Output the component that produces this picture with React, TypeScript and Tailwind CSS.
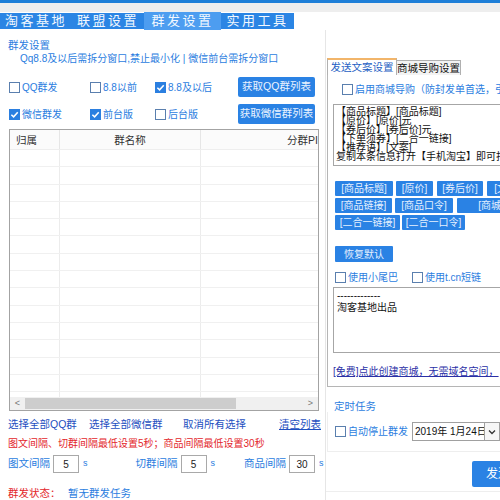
import React from "react";

const blueText = "text-[#2b7de0]";

function Check({ on }: { on: boolean }) {
  if (on) {
    return (
      <span className="w-[11px] h-[11px] shrink-0 bg-[#2b7fe0] flex items-center justify-center">
        <svg width="9" height="9" viewBox="0 0 10 10">
          <path d="M1.5 5.2 L4 7.6 L8.6 2.4" stroke="white" strokeWidth="1.7" fill="none" />
        </svg>
      </span>
    );
  }
  return <span className="w-[11px] h-[11px] shrink-0 border border-[#5a7fae] bg-white" />;
}

function Cb({ on, label, cls = "" }: { on: boolean; label: string; cls?: string }) {
  return (
    <div className={`flex items-center gap-[2px] ${cls}`}>
      <Check on={on} />
      <span className={`${blueText} text-[10px] leading-[13px] whitespace-nowrap`}>{label}</span>
    </div>
  );
}

function Btn({ label, cls = "" }: { label: string; cls?: string }) {
  return (
    <div
      className={`h-[15px] bg-[#2a82e4] text-[#e6f1ff] text-[10px] leading-[15px] flex items-center justify-center whitespace-nowrap rounded-[1px] ${cls}`}
    >
      {label}
    </div>
  );
}

function Interval({ label, value, cls = "" }: { label: string; value: string; cls?: string }) {
  return (
    <div className={`flex items-center ${cls}`}>
      <span className={`${blueText} text-[10.5px] whitespace-nowrap`}>{label}</span>
      <div className="ml-[3px] w-[26px] h-[18px] border border-[#a9a9a9] text-[10px] text-[#222] flex items-center justify-center">
        {value}
      </div>
      <span className={`${blueText} text-[9px] ml-[4px]`}>s</span>
    </div>
  );
}

export default function App() {
  const tabs = [
    { t: "淘客基地", w: "w-[72px]", on: false },
    { t: "联盟设置", w: "w-[72px]", on: false },
    { t: "群发设置", w: "w-[77px]", on: true },
    { t: "实用工具", w: "w-[73px]", on: false },
  ];
  const rows = Array.from({ length: 16 });

  return (
    <div className="w-[500px] h-[500px] overflow-hidden bg-white font-['Liberation_Sans','Noto_Sans_CJK_SC',sans-serif] text-[10px]">
      <div className="h-[3px] bg-[#1e7fd8]" />
      <div className="h-[9px] bg-[#eeeeee]" />

      {/* main tabs */}
      <div className="flex h-[18px]">
        {tabs.map((tb) => (
          <div
            key={tb.t}
            className={
              tb.on
                ? `${tb.w} h-[18px] bg-[#4d9df0] text-[#f2f8ff] text-[13px] tracking-[2.5px] leading-[18px] text-center`
                : `${tb.w} h-[16px] mt-[1px] bg-[#2b85e4] text-[#f2f8ff] text-[13px] tracking-[2.5px] leading-[16px] text-center`
            }
          >
            {tb.t}
          </div>
        ))}
      </div>

      <div className="flex">
        {/* left column */}
        <div className="w-[326px] shrink-0 h-[470px] flex flex-col border-r border-[#e6e6e6]">
          <div className={`mt-[9px] ml-[8px] ${blueText} text-[10.5px] leading-[13px]`}>群发设置</div>
          <div className={`ml-[20px] ${blueText} text-[10px] leading-[13px]`}>
            Qq8.8及以后需拆分窗口,禁止最小化 | 微信前台需拆分窗口
          </div>

          <div className="mt-[12px] h-[20px] flex items-center pl-[9px] pr-[10px]">
            <Cb on={false} label="QQ群发" cls="w-[81px]" />
            <Cb on={false} label="8.8以前" cls="w-[65px]" />
            <Cb on={true} label="8.8及以后" />
            <div className="ml-auto w-[77px] h-[20px] bg-[#2a82e4] text-[#eaf3ff] text-[10.5px] flex items-center justify-center rounded-[2px]">
              获取QQ群列表
            </div>
          </div>
          <div className="mt-[7px] h-[20px] flex items-center pl-[9px] pr-[10px]">
            <Cb on={true} label="微信群发" cls="w-[81px]" />
            <Cb on={true} label="前台版" cls="w-[65px]" />
            <Cb on={false} label="后台版" />
            <div className="ml-auto w-[77px] h-[20px] bg-[#2a82e4] text-[#eaf3ff] text-[10.5px] flex items-center justify-center rounded-[2px]">
              获取微信群列表
            </div>
          </div>

          {/* table */}
          <div className="mt-[5px] ml-[9px] w-[310px] h-[297px] border border-[#a3a3a3] flex flex-col overflow-hidden">
            <div className="h-[20px] shrink-0 flex bg-[#fbfbfb] border-b border-[#eeeeee] text-[10.5px] text-[#333] leading-[20px]">
              <div className="w-[50px] pl-[6px] border-r border-[#e6e6e6]">归属</div>
              <div className="w-[141px] text-center border-r border-[#e6e6e6]">群名称</div>
              <div className="flex-1 text-right whitespace-nowrap overflow-hidden">分群PI</div>
            </div>
            <div className="flex-1 overflow-hidden">
              {rows.map((_, i) => (
                <div key={i} className="h-[17.3px] flex border-b border-[#f0f0f0]">
                  <div className="w-[50px] border-r border-[#ececec]" />
                  <div className="w-[141px] border-r border-[#ececec]" />
                  <div className="flex-1" />
                </div>
              ))}
            </div>
            <div className="h-[13px] shrink-0 bg-[#f0f0f0] flex items-center">
              <div className="w-[15px] text-center text-[9px] text-[#777] leading-[13px]">&lt;</div>
              <div className="w-[211px] h-[11px] bg-[#cdcdcd]" />
              <div className="flex-1" />
              <div className="w-[15px] text-center text-[9px] text-[#777] leading-[13px]">&gt;</div>
            </div>
          </div>

          <div className="mt-[7px] h-[12px] flex items-center text-[10.5px] text-[#1e4fbf] leading-[12px] pl-[8px]">
            <span className="w-[81px] whitespace-nowrap">选择全部QQ群</span>
            <span className="w-[94px] whitespace-nowrap">选择全部微信群</span>
            <span className="w-[96px] whitespace-nowrap">取消所有选择</span>
            <span className="underline whitespace-nowrap">清空列表</span>
          </div>
          <div className="mt-[8px] pl-[8px] text-[10px] leading-[12px] text-[#e3262b] whitespace-nowrap">
            图文间隔、切群间隔最低设置5秒；商品间隔最低设置30秒
          </div>
          <div className="mt-[5px] h-[18px] flex items-center pl-[8px]">
            <Interval label="图文间隔" value="5" />
            <Interval label="切群间隔" value="5" cls="ml-[48px]" />
            <Interval label="商品间隔" value="30" cls="ml-[29px]" />
          </div>
          <div className="mt-[13px] pl-[8px] flex text-[10.5px] leading-[14px]">
            <span className="text-[#e3262b] w-[60px]">群发状态：</span>
            <span className={blueText}>暂无群发任务</span>
          </div>
        </div>

        {/* right column */}
        <div className="w-[240px] shrink-0 flex flex-col">
          <div className="mt-[28px] h-[17px] flex items-end">
            <div className="ml-[1px] w-[70px] h-[17px] bg-white border-t-2 border-t-[#f2b56a] border-l border-r border-[#b0b0b0] text-[#1f5fc4] text-[10.5px] leading-[14px] text-center whitespace-nowrap">
              发送文案设置
            </div>
            <div className="w-[64px] h-[15px] bg-[#f3f3f3] border-t border-r border-[#b0b0b0] text-[#111] text-[10.5px] leading-[14px] text-center whitespace-nowrap">
              商城导购设置
            </div>
          </div>
          <div className="ml-[1px] h-[312px] border border-t-0 border-[#b5b5b5] flex flex-col">
            <div className="mt-[8px] ml-[14px]">
              <Cb on={false} label="启用商城导购（防封发单首选，引导下单）" />
            </div>
            <div className="mt-[8px] ml-[5px] h-[62px] border border-[#a6a6a6] pl-[2px] pt-[2px] text-[10px] leading-[9px] text-[#111] whitespace-nowrap overflow-hidden">
              <div>【商品标题】[商品标题]</div>
              <div>【原价】[原价]元</div>
              <div>【券后价】[券后价]元</div>
              <div>【下单须券】[二合一链接]</div>
              <div>【推荐语】[文案]</div>
              <div>复制本条信息打开【手机淘宝】即可打开</div>
            </div>
            <div className="mt-[15px] ml-[7px] flex flex-col gap-[2px]">
              <div className="flex gap-[3px]">
                <Btn label="[商品标题]" cls="w-[58px]" />
                <Btn label="[原价]" cls="w-[37px]" />
                <Btn label="[券后价]" cls="w-[46px] ml-[1px]" />
                <Btn label="[文案]" cls="w-[40px] ml-[1px]" />
              </div>
              <div className="flex gap-[3px]">
                <Btn label="[商品链接]" cls="w-[57px]" />
                <Btn label="[商品口令]" cls="w-[58px]" />
                <Btn label="[商城链接]" cls="w-[74px] ml-[1px] pl-[14px]" />
              </div>
              <div className="flex gap-[2px]">
                <Btn label="[二合一链接]" cls="w-[65px]" />
                <Btn label="[二合一口令]" cls="w-[63px]" />
              </div>
            </div>
            <Btn label="恢复默认" cls="mt-[16px] ml-[7px] w-[58px] h-[16px]" />
            <div className="mt-[9px] ml-[7px] flex items-center">
              <Cb on={false} label="使用小尾巴" cls="w-[77px]" />
              <Cb on={false} label="使用t.cn短链" />
            </div>
            <div className="mt-[3px] ml-[5px] h-[66px] border border-[#a6a6a6] pl-[3px] pt-[2px] text-[10px] leading-[11px] text-[#111]">
              <div>-------------</div>
              <div className="mt-[1px]">淘客基地出品</div>
            </div>
            <div className="mt-[13px] ml-[5px] text-[10px] leading-[12px] text-[#2a2fa6] underline whitespace-nowrap">
              [免费]点此创建商城，无需域名空间，
            </div>
          </div>

          {/* timed task */}
          <div className={`mt-[13px] ml-[8px] ${blueText} text-[10.5px] leading-[12px]`}>定时任务</div>
          <div className="ml-[1px] h-[40px] border-l border-b border-[#eeeeee] flex items-center">
            <Cb on={false} label="自动停止群发" cls="ml-[7px] w-[77px]" />
            <div className="w-[88px] h-[19px] border border-[#a0a0a0] flex items-center overflow-hidden">
              <span className="pl-[2px] flex-1 text-[10px] text-[#111] whitespace-nowrap overflow-hidden">2019年 1月24日</span>
              <div className="w-[15px] h-[17px] border-l border-[#a0a0a0] bg-[#f6f6f6] flex items-center justify-center shrink-0">
                <svg width="8" height="6" viewBox="0 0 8 6">
                  <path d="M1 1.5 L4 4.5 L7 1.5" stroke="#333" strokeWidth="1.3" fill="none" />
                </svg>
              </div>
            </div>
          </div>
          <div className="mt-[9px] ml-[146px] w-[60px] h-[26px] bg-[#2a82e4] rounded-[2px] text-white text-[12px] leading-[26px] pl-[14px]">
            发送
          </div>
          <div className="mt-[4px] h-[1px] bg-[#eeeeee]" />
        </div>
      </div>
    </div>
  );
}
